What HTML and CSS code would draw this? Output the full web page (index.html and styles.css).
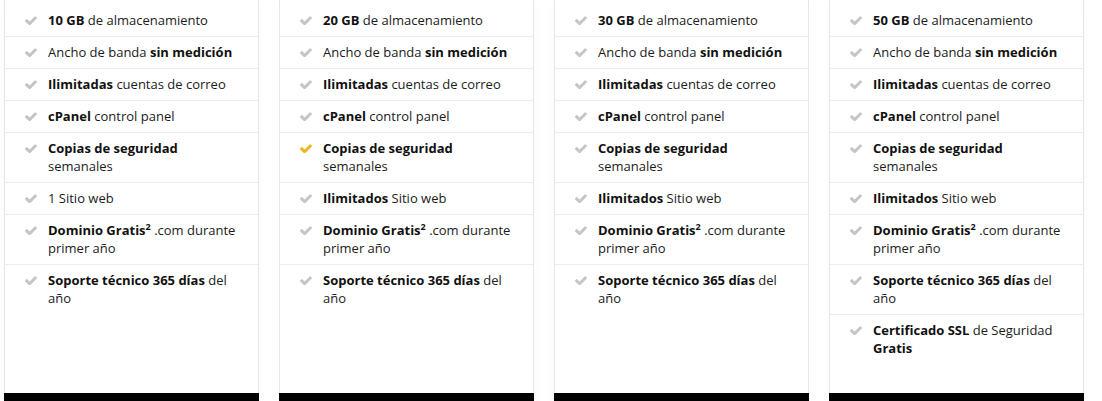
FILE: index.html
```html
<!DOCTYPE html>
<html lang="es">
<head>
    <meta charset="UTF-8">
    <meta name="viewport" content="width=device-width, initial-scale=1.0">
    <title>Planes de hosting</title>
    <link rel="stylesheet" href="styles.css">
</head>
<body>
    <svg width="0" height="0" style="position:absolute">
        <symbol id="check" viewBox="121 338 1550 1088">
            <path d="M1671 566q0 40-28 68l-724 724-136 136q-28 28-68 28t-68-28l-136-136-362-362q-28-28-28-68t28-68l136-136q28-28 68-28t68 28l294 295 656-657q28-28 68-28t68 28l136 136q28 28 28 68z"/>
        </symbol>
    </svg>

    <main class="plans">
        <div class="plan">
            <ul class="features">
                <li><svg class="tick"><use href="#check"/></svg><span><b>10 GB</b> de almacenamiento</span></li>
                <li><svg class="tick"><use href="#check"/></svg><span>Ancho de banda <b>sin medición</b></span></li>
                <li><svg class="tick"><use href="#check"/></svg><span><b>Ilimitadas</b> cuentas de correo</span></li>
                <li><svg class="tick"><use href="#check"/></svg><span><b>cPanel</b> control panel</span></li>
                <li><svg class="tick"><use href="#check"/></svg><span><b>Copias de seguridad</b> semanales</span></li>
                <li><svg class="tick"><use href="#check"/></svg><span>1 Sitio web</span></li>
                <li><svg class="tick"><use href="#check"/></svg><span><b>Dominio Gratis<sup>2</sup></b> .com durante primer año</span></li>
                <li><svg class="tick"><use href="#check"/></svg><span><b>Soporte técnico 365 días</b> del año</span></li>
            </ul>
            <div class="plan-footer"></div>
        </div>

        <div class="plan">
            <ul class="features">
                <li><svg class="tick"><use href="#check"/></svg><span><b>20 GB</b> de almacenamiento</span></li>
                <li><svg class="tick"><use href="#check"/></svg><span>Ancho de banda <b>sin medición</b></span></li>
                <li><svg class="tick"><use href="#check"/></svg><span><b>Ilimitadas</b> cuentas de correo</span></li>
                <li><svg class="tick"><use href="#check"/></svg><span><b>cPanel</b> control panel</span></li>
                <li><svg class="tick highlight"><use href="#check"/></svg><span><b>Copias de seguridad</b> semanales</span></li>
                <li><svg class="tick"><use href="#check"/></svg><span><b>Ilimitados</b> Sitio web</span></li>
                <li><svg class="tick"><use href="#check"/></svg><span><b>Dominio Gratis<sup>2</sup></b> .com durante primer año</span></li>
                <li><svg class="tick"><use href="#check"/></svg><span><b>Soporte técnico 365 días</b> del año</span></li>
            </ul>
            <div class="plan-footer"></div>
        </div>

        <div class="plan">
            <ul class="features">
                <li><svg class="tick"><use href="#check"/></svg><span><b>30 GB</b> de almacenamiento</span></li>
                <li><svg class="tick"><use href="#check"/></svg><span>Ancho de banda <b>sin medición</b></span></li>
                <li><svg class="tick"><use href="#check"/></svg><span><b>Ilimitadas</b> cuentas de correo</span></li>
                <li><svg class="tick"><use href="#check"/></svg><span><b>cPanel</b> control panel</span></li>
                <li><svg class="tick"><use href="#check"/></svg><span><b>Copias de seguridad</b> semanales</span></li>
                <li><svg class="tick"><use href="#check"/></svg><span><b>Ilimitados</b> Sitio web</span></li>
                <li><svg class="tick"><use href="#check"/></svg><span><b>Dominio Gratis<sup>2</sup></b> .com durante primer año</span></li>
                <li><svg class="tick"><use href="#check"/></svg><span><b>Soporte técnico 365 días</b> del año</span></li>
            </ul>
            <div class="plan-footer"></div>
        </div>

        <div class="plan">
            <ul class="features">
                <li><svg class="tick"><use href="#check"/></svg><span><b>50 GB</b> de almacenamiento</span></li>
                <li><svg class="tick"><use href="#check"/></svg><span>Ancho de banda <b>sin medición</b></span></li>
                <li><svg class="tick"><use href="#check"/></svg><span><b>Ilimitadas</b> cuentas de correo</span></li>
                <li><svg class="tick"><use href="#check"/></svg><span><b>cPanel</b> control panel</span></li>
                <li><svg class="tick"><use href="#check"/></svg><span><b>Copias de seguridad</b> semanales</span></li>
                <li><svg class="tick"><use href="#check"/></svg><span><b>Ilimitados</b> Sitio web</span></li>
                <li><svg class="tick"><use href="#check"/></svg><span><b>Dominio Gratis<sup>2</sup></b> .com durante primer año</span></li>
                <li><svg class="tick"><use href="#check"/></svg><span><b>Soporte técnico 365 días</b> del año</span></li>
                <li><svg class="tick"><use href="#check"/></svg><span><b>Certificado SSL</b> de Seguridad <b>Gratis</b></span></li>
            </ul>
            <div class="plan-footer"></div>
        </div>
    </main>
</body>
</html>
```

FILE: styles.css
```css
body {
    margin: 0;
    background-color: #fff;
    font-family: "Open Sans", "Liberation Sans", sans-serif;
    font-size: 13px;
    color: #1b1b1b;
}

.plans {
    display: grid;
    grid-template-columns: repeat(4, 255px);
    gap: 20px;
    padding: 0 0 0 4px;
    height: 401px;
    overflow: hidden;
}

.plan {
    display: flex;
    flex-direction: column;
    background-color: #fff;
    border-left: 1px solid #e6e6e6;
    border-right: 1px solid #e6e6e6;
    box-shadow: 0 0 12px rgba(0, 0, 0, 0.025);
}

.features {
    list-style: none;
    margin: 0;
    padding: 5px 0 29px;
    flex: 1;
}

.features li {
    display: flex;
    align-items: flex-start;
    padding: 6px 17px 7px 20px;
    line-height: 18px;
    border-bottom: 1px solid #ececec;
}

.features li:last-child {
    border-bottom: none;
}

.features b {
    font-weight: 700;
    color: #111;
}

.features sup {
    font-size: 9px;
    line-height: 0;
    vertical-align: 5px;
}

.tick {
    flex: none;
    width: 12px;
    height: 9px;
    margin: 5px 11px 0 0;
    fill: #c6c6c6;
}

.tick.highlight {
    fill: #eab71c;
}

.plan-footer {
    height: 20px;
    margin: 0 -1px;
    background-color: #000;
}
```
